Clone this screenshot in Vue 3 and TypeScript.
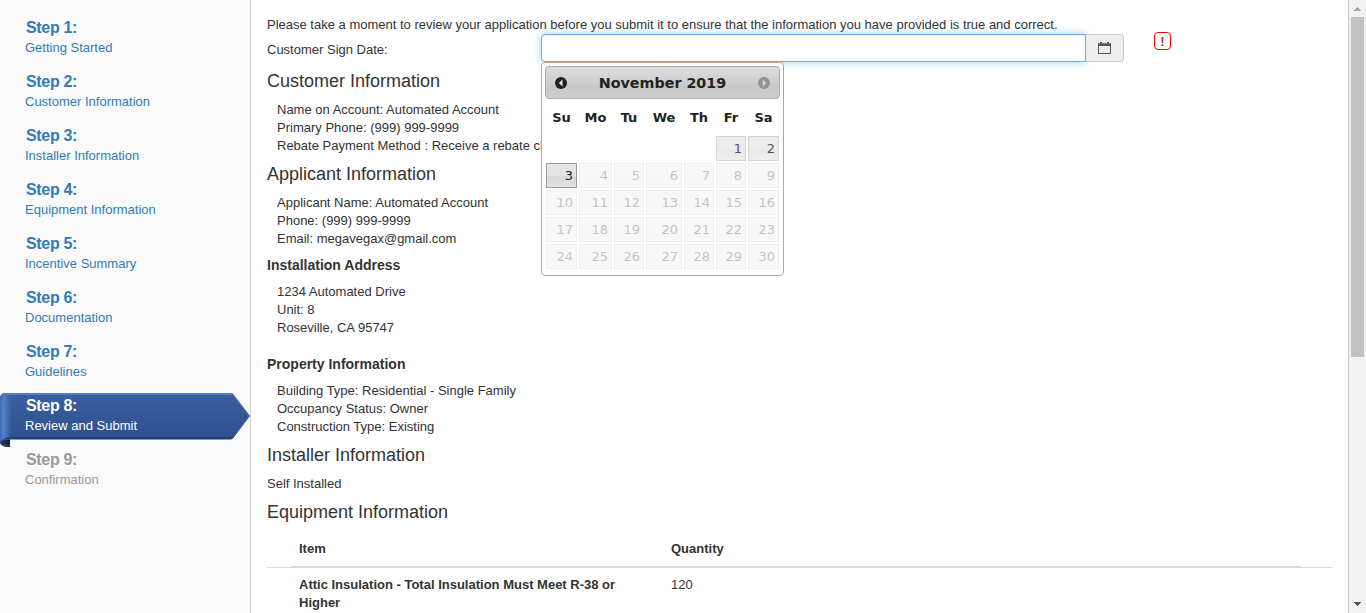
<script setup lang="ts">
interface Step { title: string; label: string; state?: 'active' | 'disabled' }
interface Day { n: number; state: 'on' | 'today' | 'off' }

const steps: Step[] = [
  { title: 'Step 1:', label: 'Getting Started' },
  { title: 'Step 2:', label: 'Customer Information' },
  { title: 'Step 3:', label: 'Installer Information' },
  { title: 'Step 4:', label: 'Equipment Information' },
  { title: 'Step 5:', label: 'Incentive Summary' },
  { title: 'Step 6:', label: 'Documentation' },
  { title: 'Step 7:', label: 'Guidelines' },
  { title: 'Step 8:', label: 'Review and Submit', state: 'active' },
  { title: 'Step 9:', label: 'Confirmation', state: 'disabled' },
]
const weekdays = ['Su', 'Mo', 'Tu', 'We', 'Th', 'Fr', 'Sa']
const days: Day[] = Array.from({ length: 30 }, (_, i) => ({
  n: i + 1,
  state: i < 2 ? 'on' : i === 2 ? 'today' : 'off',
}))
</script>

<template>
  <div class="page">
    <nav class="sidebar">
      <div v-for="s in steps" :key="s.title" class="step" :class="s.state">
        <svg v-if="s.state === 'active'" class="ribbon" width="250" height="54" viewBox="0 0 250 54">
          <defs>
            <linearGradient id="body" x1="0" y1="0" x2="0" y2="1">
              <stop offset="0" stop-color="#39609f" />
              <stop offset="1" stop-color="#2f4f8c" />
            </linearGradient>
            <linearGradient id="curl" x1="0" y1="0" x2="1" y2="0">
              <stop offset="0" stop-color="#3f69b2" />
              <stop offset="0.25" stop-color="#557fc8" />
              <stop offset="0.5" stop-color="#436eb9" />
              <stop offset="1" stop-color="#36599a" stop-opacity="0" />
            </linearGradient>
            <linearGradient id="tail" x1="0" y1="1" x2="1" y2="0">
              <stop offset="0" stop-color="#2f5391" />
              <stop offset="0.5" stop-color="#1a2f55" />
              <stop offset="1" stop-color="#070e1a" />
            </linearGradient>
          </defs>
          <path d="M0 46H10V54H6Q1 53 0 50Z" fill="url(#tail)" />
          <path d="M0 4Q1 0 5 0H231Q233 0 234 2L250 23L234 44Q232 47 229 47H8Q3 47 0 49Z" fill="url(#body)" />
          <path d="M1 2Q2 0 5 0H231L233 2Z" fill="#547dc1" />
          <path d="M0 4Q1 2 4 2H14V44H8Q3 45 0 49Z" fill="url(#curl)" />
          <path d="M8 44H234L232 46H4Z" fill="#233e70" />
          <path d="M10 46H232L230 47H10Z" fill="#7f9dce" />
          <path d="M232 1L249 23L233 45" fill="none" stroke="#47699f" stroke-width="1" />
        </svg>
        <a class="step-text"><b>{{ s.title }}</b><span>{{ s.label }}</span></a>
      </div>
    </nav>

    <main class="content">
      <p class="intro">Please take a moment to review your application before you submit it to ensure that the information you have provided is true and correct.</p>
      <div class="sign-row">
        <label class="sign-label">Customer Sign Date:</label>
        <div class="group">
          <input class="date" type="text" />
          <button class="cal-btn" type="button">
            <svg width="13" height="12" viewBox="0 0 13 12" shape-rendering="crispEdges">
              <path d="M0 1H13V12H0ZM1 4V11H12V4Z" fill="#555" fill-rule="evenodd" />
              <path d="M2 0h2v2H2zM9 0h2v2H9z" fill="#555" />
              <path d="M1 1h1v1H1zM4 1h1v1H4zM6 1h1v1H6zM8 1h1v1H8zM11 1h1v1h-1z" fill="#999" />
            </svg>
          </button>
          <div class="picker">
            <div class="picker-head">
              <svg width="12" height="12" viewBox="0 0 12 12"><circle cx="6" cy="6" r="6" fill="#222" /><path d="M7.5 2.5V9.5L3.8 6Z" fill="#e4e4e4" /></svg>
              <span>November 2019</span>
              <svg width="12" height="12" viewBox="0 0 12 12"><circle cx="6" cy="6" r="6" fill="#929292" /><path d="M4.7 2.5V9.5L8.4 6Z" fill="#d5d5d5" /></svg>
            </div>
            <div class="cols week"><span v-for="w in weekdays" :key="w">{{ w }}</span></div>
            <div class="cols days">
              <span v-for="d in days" :key="d.n" class="day" :class="[d.state, { first: d.n === 1 }]">{{ d.n }}</span>
            </div>
          </div>
        </div>
        <span class="alert">!</span>
      </div>

      <h3>Customer Information</h3>
      <div class="lines">
        <div>Name on Account: Automated Account</div>
        <div>Primary Phone: (999) 999-9999</div>
        <div>Rebate Payment Method : Receive a rebate check</div>
      </div>
      <h3>Applicant Information</h3>
      <div class="lines">
        <div>Applicant Name: Automated Account</div>
        <div>Phone: (999) 999-9999</div>
        <div>Email: megavegax@gmail.com</div>
      </div>
      <h4>Installation Address</h4>
      <div class="lines">
        <div>1234 Automated Drive</div>
        <div>Unit: 8</div>
        <div>Roseville, CA 95747</div>
      </div>
      <h4 class="property">Property Information</h4>
      <div class="lines">
        <div>Building Type: Residential - Single Family</div>
        <div>Occupancy Status: Owner</div>
        <div>Construction Type: Existing</div>
      </div>
      <h3>Installer Information</h3>
      <p class="self">Self Installed</p>
      <h3 class="equip">Equipment Information</h3>
      <section class="table">
        <div class="thead"><span>Item</span><span>Quantity</span></div>
        <div class="trow"><b>Attic Insulation - Total Insulation Must Meet R-38 or Higher</b><span>120</span></div>
      </section>
    </main>

    <div class="scrollbar">
      <svg width="17" height="17" viewBox="0 0 17 17" shape-rendering="crispEdges"><path d="M8 7h1v1h1v1h1v1h1v1H5v-1h1V9h1V8h1z" fill="#a3a3a3" /></svg>
      <div class="thumb"></div>
      <svg class="down" width="17" height="17" viewBox="0 0 17 17" shape-rendering="crispEdges"><path d="M5 6h7v1h-1v1h-1v1H9v1H8V9H7V8H6V7H5z" fill="#505050" /></svg>
    </div>
  </div>
</template>

<style>
html, body { margin: 0; overflow: hidden; }
</style>

<style scoped>
* { box-sizing: border-box; }
.page {
  display: flex;
  width: 1366px;
  height: 613px;
  overflow: hidden;
  background: #fff;
  color: #333;
  font: 13px/18px "Liberation Sans", Arial, sans-serif;
}
.sidebar {
  flex: 0 0 251px;
  padding-top: 15px;
  background: #fafafa;
  border-right: 1px solid #ccc;
}
.step { position: relative; height: 54px; color: #337ab7; }
.step.active { color: #fff; }
.step.disabled { color: #999; }
.ribbon { position: absolute; left: 0; top: 0; }
.step-text { position: relative; display: flex; flex-direction: column; padding: 2px 0 0 25px; }
.step-text b { font-size: 16px; line-height: 22px; padding-left: 1px; letter-spacing: -.33px; }
.step-text span { line-height: 18px; }

.content { flex: 1; min-width: 0; padding: 16px 16px 0; border-right: 1px solid #c6c6c6; }
p, h3, h4 { margin: 0; }
.sign-row { display: flex; height: 28px; }
.sign-label { width: 274px; padding-top: 7px; }
.group { position: relative; display: flex; width: 583px; }
.date {
  width: 545px;
  height: 28px;
  border: 1px solid #66afe9;
  border-radius: 4px 0 0 4px;
  background: #fff;
  outline: none;
  box-shadow: inset 0 1px 1px rgba(0, 0, 0, .075), 0 0 8px rgba(102, 175, 233, .6);
}
.cal-btn {
  display: flex;
  align-items: center;
  width: 38px;
  height: 28px;
  padding: 0 0 0 12px;
  border: 1px solid #ccc;
  border-left: 0;
  border-radius: 0 4px 4px 0;
  background: #eee;
}
.alert {
  width: 17px;
  height: 18px;
  margin: -2px 0 0 30px;
  border: 1px solid #f00;
  border-radius: 4px;
  font: bold 13px/17px "Liberation Sans", Arial, sans-serif;
  text-align: center;
  color: #a33a3a;
}

.picker {
  position: absolute;
  left: 0;
  top: 28px;
  width: 243px;
  height: 214px;
  padding: 3px;
  border: 1px solid #aaa;
  border-radius: 4px;
  background: #fff;
  color: #222;
  font-family: Verdana, "DejaVu Sans", sans-serif;
  z-index: 2;
}
.picker-head {
  display: flex;
  align-items: center;
  justify-content: space-between;
  height: 33px;
  padding: 0 9px;
  border: 1px solid #aaa;
  border-radius: 4px;
  background: linear-gradient(#dedede, #ccc 55%, #c8c8c8 60%, #cecece);
  font-size: 14.3px;
  font-weight: bold;
}
.cols { display: grid; grid-template-columns: 31px 33px 30px 36px 30px 30px 31px; column-gap: 2px; margin-left: 1px; }
.week { margin-top: 9px; font-weight: bold; text-align: center; line-height: 20px; }
.days { margin-top: 8px; row-gap: 2px; }
.day {
  height: 25px;
  padding: 0 3px;
  border: 1px solid #d3d3d3;
  background: linear-gradient(#ededed 0 50%, #e9e9e9 55%, #eee);
  color: #555;
  text-align: right;
  line-height: 24px;
}
.first { grid-column: 6; }
.today { border-color: #999; background: linear-gradient(#e4e4e4 0 50%, #d9d9d9 55%, #dfdfdf); color: #212121; }
.off { opacity: .35; }

h3 { margin-top: 9px; font-size: 18px; line-height: 20px; font-weight: normal; }
h4 { margin-top: 8px; font-size: 14px; line-height: 18px; }
.lines { margin-top: 10px; padding-left: 10px; }
h4 + .lines { margin-top: 9px; }
.property { margin-top: 18px; }
.self { margin-top: 10px; }
.equip { margin-top: 9px; }
.table { width: 1065px; margin-top: 18px; }
.thead, .trow { display: grid; grid-template-columns: 372px 1fr; padding-left: 32px; }
.thead {
  height: 28px;
  font-weight: bold;
  background: linear-gradient(#ddd, #ddd) 0 27px / 1065px 1px no-repeat, linear-gradient(#ddd, #ddd) 24px 26px / 1010px 2px no-repeat;
}
.trow { padding-top: 8px; }
.trow b { width: 340px; }

.scrollbar { display: flex; flex: 0 0 17px; flex-direction: column; background: #f1f1f1; }
.thumb { width: 13px; height: 340px; margin-left: 2px; background: #c1c1c1; }
.down { margin-top: auto; }
svg { display: block; }
</style>
